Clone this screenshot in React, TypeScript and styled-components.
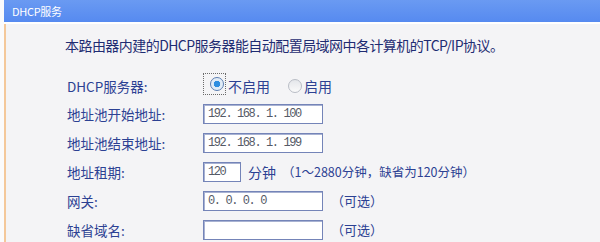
import styled, { createGlobalStyle } from 'styled-components';

const GlobalStyle = createGlobalStyle`
  html, body {
    margin: 0;
    padding: 0;
    background: #fbfbfc;
  }
  body {
    font-family: "Noto Sans CJK SC", "Noto Sans", sans-serif;
  }
`;

const Panel = styled.div`
  margin-left: 4px;
  width: 596px;
  height: 242px;
  display: flex;
  flex-direction: column;
`;

const Header = styled.div`
  height: 22px;
  flex-shrink: 0;
  background: linear-gradient(#6a9af2, #568af0);
  color: #ffffff;
  font-size: 11px;
  line-height: 22px;
  padding-left: 8px;
  letter-spacing: -0.3px;
  border-bottom: 2px solid #ffffff;
`;

const Body = styled.div`
  flex: 1;
  background: #f4f4f6;
  border-left: 2px solid #f4c89a;
  padding: 11px 0 0 59px;
`;

const Desc = styled.p`
  margin: 0 0 18px 0;
  height: 20px;
  line-height: 20px;
  font-size: 14px;
  color: #1f2c72;
  letter-spacing: -0.55px;
`;

const Form = styled.div`
  display: grid;
  grid-template-columns: 136px 1fr;
  grid-template-rows: 26px repeat(5, 29px);
  align-items: center;
  padding-left: 2px;
`;

const Label = styled.div`
  font-size: 13.5px;
  color: #2c4193;
  line-height: 20px;
`;

const Cell = styled.div`
  display: flex;
  align-items: center;
`;

const RadioFocus = styled.span`
  width: 23px;
  height: 22px;
  border: 1px dotted #6a6a6a;
  display: flex;
  align-items: center;
  justify-content: flex-end;
  padding-right: 1px;
  box-sizing: border-box;
  margin-top: -4px;
`;

const Radio = styled.span<{ $on?: boolean }>`
  width: 14px;
  height: 14px;
  border-radius: 50%;
  box-sizing: border-box;
  border: 1px solid ${({ $on }) => ($on ? '#5b7db0' : '#b9bdc6')};
  background: ${({ $on }) =>
    $on ? 'radial-gradient(circle, #2f8ee0 0 3px, #dbe8f6 3.5px, #f4f8fc 100%)' : 'linear-gradient(#e4e6ea, #fafafa)'};
  flex-shrink: 0;
`;

const RadioText = styled.span`
  font-size: 14px;
  color: #2c4193;
  margin: 0 18px 0 2px;
  line-height: 20px;
`;

const Input = styled.div<{ $w?: number }>`
  width: ${({ $w }) => $w ?? 120}px;
  height: 20px;
  box-sizing: border-box;
  background: #ffffff;
  border: 1px solid #7484b8;
  box-shadow: inset 1px 1px 0 #a8b2d2;
  font-family: "Liberation Mono", monospace;
  font-size: 12px;
  color: #555a66;
  line-height: 18px;
  padding-left: 4px;
  letter-spacing: -1.4px;
  white-space: pre;
  overflow: hidden;
`;

const Unit = styled.span`
  font-size: 14px;
  color: #2c4193;
  margin-left: 7px;
`;

const Hint = styled.span`
  font-size: 12.5px;
  color: #2c4193;
  margin-left: 6px;
`;

const Optional = styled.span`
  font-size: 13px;
  color: #2c4193;
  margin-left: 8px;
`;

export default function App() {
  return (
    <>
      <GlobalStyle />
      <Panel>
        <Header>DHCP服务</Header>
        <Body>
          <Desc>本路由器内建的DHCP服务器能自动配置局域网中各计算机的TCP/IP协议。</Desc>
          <Form>
            <Label>DHCP服务器:</Label>
            <Cell>
              <RadioFocus>
                <Radio $on />
              </RadioFocus>
              <RadioText>不启用</RadioText>
              <Radio />
              <RadioText>启用</RadioText>
            </Cell>

            <Label>地址池开始地址:</Label>
            <Cell>
              <Input>192. 168. 1. 100</Input>
            </Cell>

            <Label>地址池结束地址:</Label>
            <Cell>
              <Input>192. 168. 1. 199</Input>
            </Cell>

            <Label>地址租期:</Label>
            <Cell>
              <Input $w={38}>120</Input>
              <Unit>分钟</Unit>
              <Hint>（1～2880分钟，缺省为120分钟）</Hint>
            </Cell>

            <Label>网关:</Label>
            <Cell>
              <Input>0. 0. 0. 0</Input>
              <Optional>（可选）</Optional>
            </Cell>

            <Label>缺省域名:</Label>
            <Cell>
              <Input />
              <Optional>（可选）</Optional>
            </Cell>
          </Form>
        </Body>
      </Panel>
    </>
  );
}
